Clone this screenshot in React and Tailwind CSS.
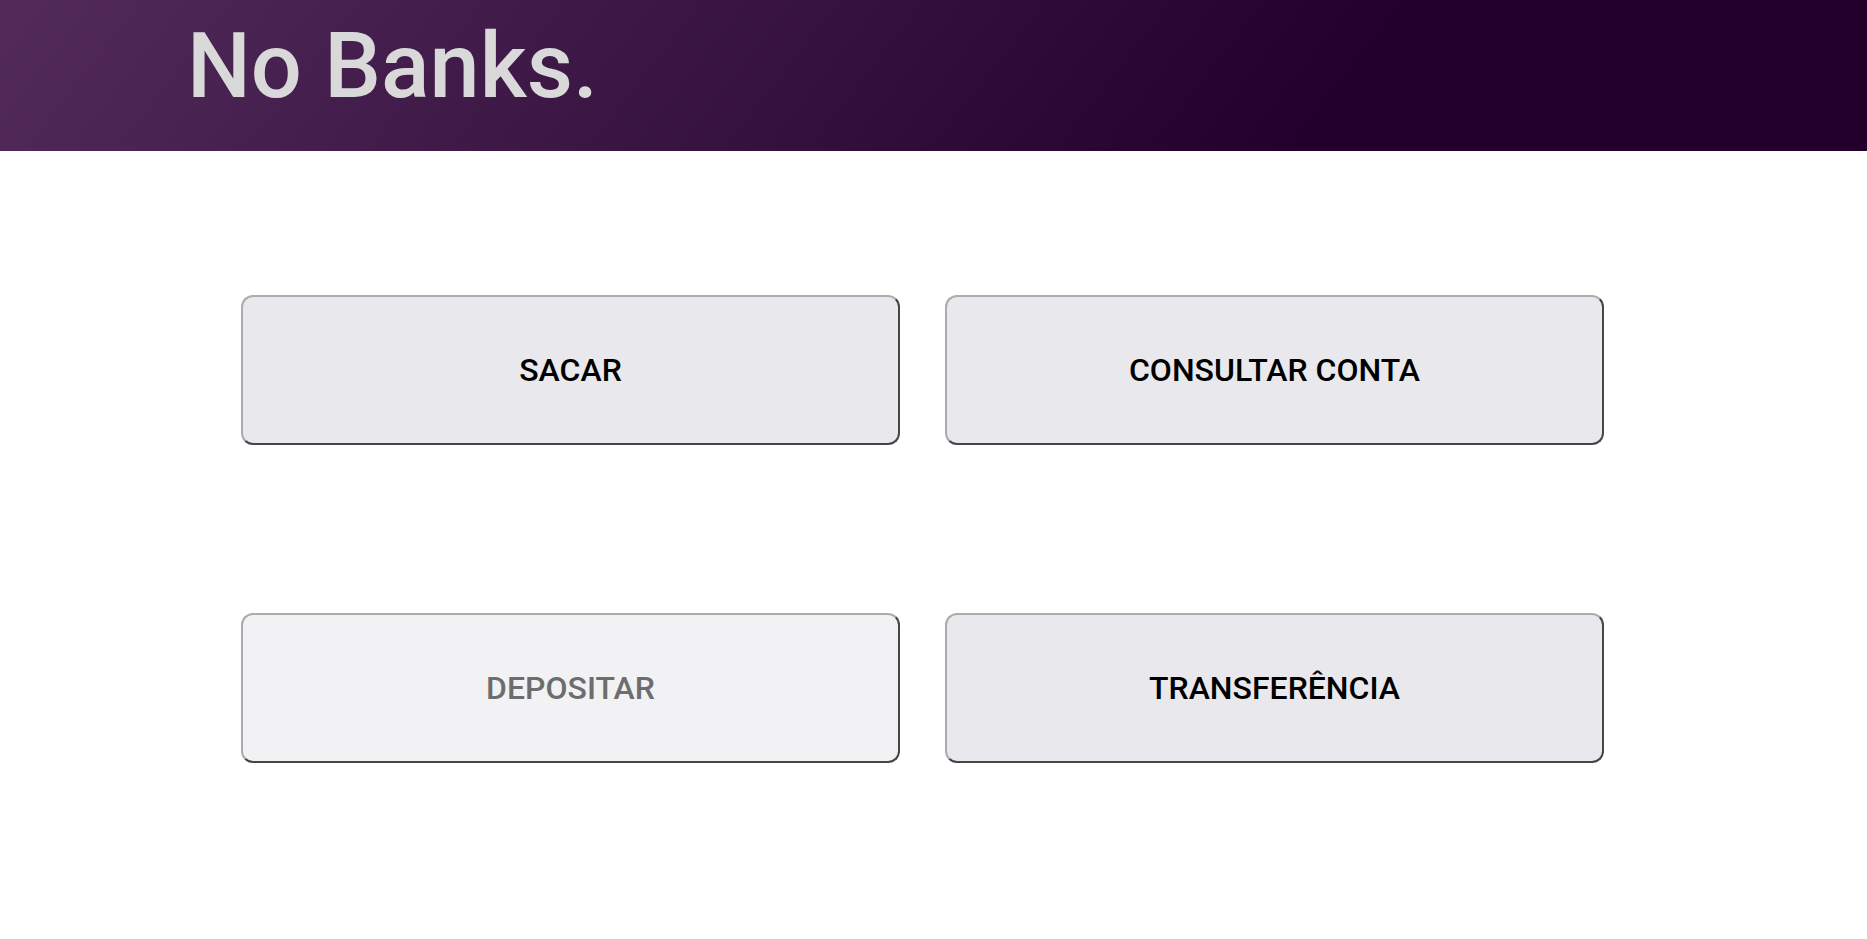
import React from "react";

const options = [
  { label: "SACAR" },
  { label: "CONSULTAR CONTA" },
  { label: "DEPOSITAR", disabled: true },
  { label: "TRANSFERÊNCIA" },
];

const MenuButton = ({ label, disabled }) => (
  <button
    disabled={disabled}
    className={`h-[150px] rounded-[12px] border-2 border-t-[#acacac] border-l-[#acacac] border-r-[#464646] border-b-[#464646] text-[32px] font-medium ${
      disabled ? "bg-[#f2f2f4] text-[#6d6d6d]" : "bg-[#e9e8ed] text-black"
    }`}
  >
    {label}
  </button>
);

const App = () => {
  return (
    <div className="min-h-screen bg-white" style={{ fontFamily: "Roboto, 'Noto Sans', sans-serif" }}>
      <header className="h-[151px] bg-[linear-gradient(128deg,#522b5a_0%,#22002b_72%)] pl-[187px]">
        <h1 className="pt-[8px] text-[90px] leading-[118px] font-medium text-[#d9d9d9]">No Banks.</h1>
      </header>
      <main className="grid grid-cols-2 gap-x-[45px] gap-y-[168px] pt-[144px] pl-[241px] pr-[263px]">
        {options.map((o) => (
          <MenuButton key={o.label} {...o} />
        ))}
      </main>
    </div>
  );
};

export default App;
